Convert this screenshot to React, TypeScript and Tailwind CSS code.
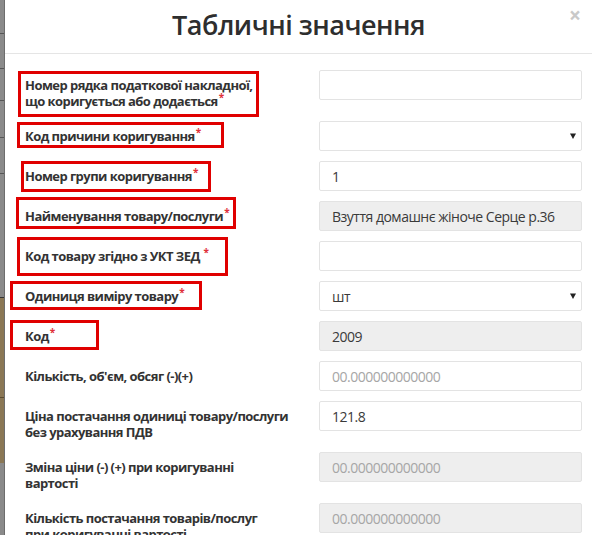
import React from 'react';

type Row = {
  label: string[];
  req?: boolean;
  space?: boolean;
  kind: 'input' | 'select' | 'disabled';
  value?: string;
  placeholder?: string;
  tall?: boolean;
  box?: string;
};

const rows: Row[] = [
  {
    label: ['Номер рядка податкової накладної,', 'що коригується або додається'],
    req: true,
    kind: 'input',
    tall: true,
    box: 'left-[13px] top-[1px] w-[241px] h-[46px]',
  },
  { label: ['Код причини коригування'], req: true, kind: 'select', box: 'left-[12px] top-[1px] w-[207px] h-[26px]' },
  { label: ['Номер групи коригування'], req: true, kind: 'input', value: '1', box: 'left-[16px] top-0 w-[190px] h-[31px]' },
  {
    label: ['Найменування товару/послуги'],
    req: true,
    kind: 'disabled',
    value: 'Взуття домашнє жіноче Серце р.36',
    box: 'left-[11px] top-[-4px] w-[220px] h-[32px]',
  },
  { label: ['Код товару згідно з УКТ ЗЕД'], req: true, space: true, kind: 'input', box: 'left-[12px] top-[-4px] w-[211px] h-[39px]' },
  { label: ['Одиниця виміру товару'], req: true, kind: 'select', value: 'шт', box: 'left-[5px] top-0 w-[192px] h-[29px]' },
  { label: ['Код'], req: true, kind: 'disabled', value: '2009', box: 'left-[5px] top-[-1px] w-[89px] h-[30px]' },
  { label: ['Кількість, об\'єм, обсяг (-)(+)'], kind: 'input', placeholder: '00.000000000000' },
  {
    label: ['Ціна постачання одиниці товару/послуги', 'без урахування ПДВ'],
    kind: 'input',
    value: '121.8',
    tall: true,
  },
  {
    label: ['Зміна ціни (-) (+) при коригуванні', 'вартості'],
    kind: 'disabled',
    placeholder: '00.000000000000',
    tall: true,
  },
  {
    label: ['Кількість постачання товарів/послуг', 'при коригуванні вартості'],
    kind: 'disabled',
    placeholder: '00.000000000000',
    tall: true,
  },
];

function Field({ row }: { row: Row }) {
  const base =
    'h-[30px] w-full rounded-[2px] border border-[#e3e3e3] pl-[12px] flex items-center text-[14px] tracking-[-0.5px] text-[#3a3a3a] whitespace-nowrap overflow-hidden';
  if (row.kind === 'select') {
    return (
      <div className={`${base} bg-white justify-between pr-[5px]`}>
        <span>{row.value}</span>
        <svg width="6" height="6" viewBox="0 0 6 6">
          <path d="M0 0.5 H6 L3 6 Z" fill="#222" />
        </svg>
      </div>
    );
  }
  const bg = row.kind === 'disabled' ? 'bg-[#eeeeee]' : 'bg-white';
  return (
    <div className={`${base} ${bg} pr-[12px]`}>
      {row.value ? <span>{row.value}</span> : <span className="text-[#a6a6a6]">{row.placeholder}</span>}
    </div>
  );
}

function BackStrip() {
  return (
    <div className="w-[5px] shrink-0 flex flex-col bg-[#8a8a8a] border-r border-[#6d6d6d]">
      <div className="h-[33px]" />
      <div className="h-px bg-[#555]" />
      <div className="h-[34px]" />
      <div className="h-px bg-[#555]" />
      <div className="h-[31px]" />
      <div className="h-px bg-[#555]" />
      <div className="h-[36px]" />
      <div className="h-px bg-[#555]" />
      <div className="h-[35px]" />
      <div className="h-px bg-[#555]" />
      <div className="h-[123px]" />
      <div className="h-px bg-[#333]" />
      <div className="h-[165px] bg-[#8a7755] flex flex-col">
        <div className="h-[99px]" />
        <div className="h-px bg-[#5a4a30]" />
      </div>
      <div className="flex-1" />
    </div>
  );
}

export default function App() {
  return (
    <div className="w-[592px] h-[535px] overflow-hidden flex bg-white" style={{ fontFamily: '"Open Sans", "Noto Sans", sans-serif' }}>
      <BackStrip />
      <div className="flex-1 flex flex-col bg-white min-h-0">
        <div className="relative shrink-0 h-[54px] border-b border-[#e5e5e5] flex items-start justify-center pt-[11px]">
          <h1 className="text-[27px] leading-none font-semibold tracking-[-0.5px] text-[#2e2e2e]">Табличні значення</h1>
          <span className="absolute right-[11px] top-0 text-[21px] font-bold text-[#c9c9c9]">×</span>
        </div>
        <div className="pt-[16px] flex flex-col gap-[10px]">
          {rows.map((row, i) => (
            <div key={i} className={`relative shrink-0 flex ${row.tall ? 'h-[41px]' : 'h-[30px]'}`}>
              <div className="w-[314px] shrink-0 pl-[20px] pt-[7px] text-[13px] leading-[16px] font-bold tracking-[-0.55px] text-[#333]">
                {row.label.map((l, j) => (
                  <div key={j} className="whitespace-nowrap">
                    {l}
                    {row.req && j === row.label.length - 1 && (
                      <>
                        {row.space && ' '}
                        <sup className="text-[#e0303a] text-[10px] top-[-5px] ml-[1px]">*</sup>
                      </>
                    )}
                  </div>
                ))}
              </div>
              <div className="w-[263px]">
                <Field row={row} />
              </div>
              {row.box && <div className={`absolute border-[3px] border-[#e00000] ${row.box}`} />}
            </div>
          ))}
        </div>
      </div>
    </div>
  );
}
